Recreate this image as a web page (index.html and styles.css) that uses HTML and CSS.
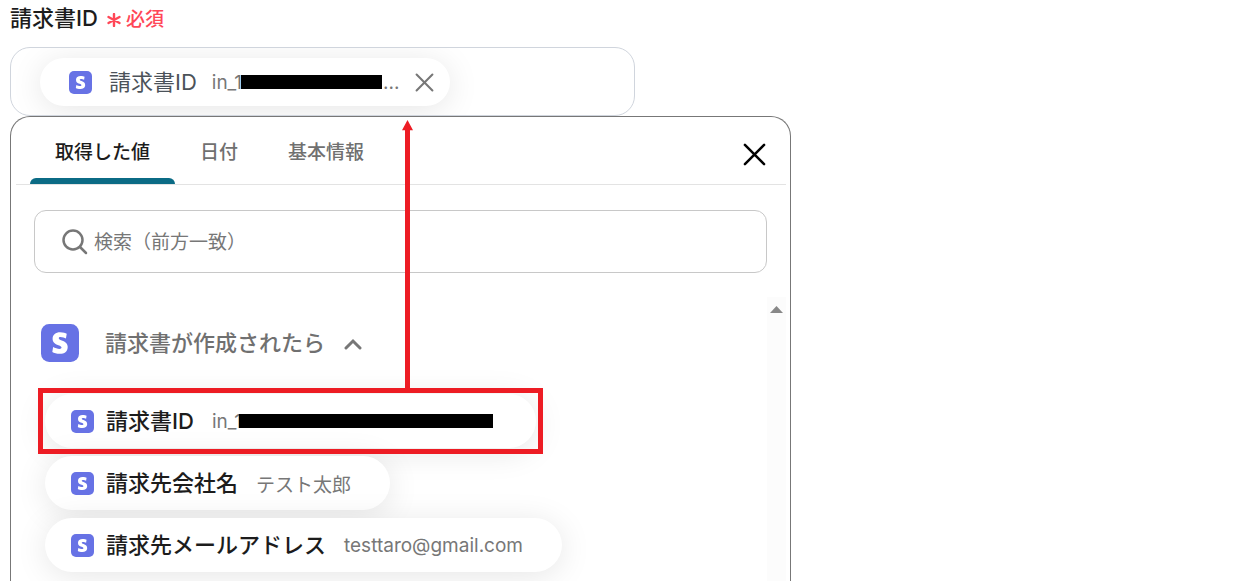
FILE: index.html
```html
<!DOCTYPE html>
<html lang="ja">

<head>
    <meta charset="UTF-8">
    <title>請求書ID</title>
    <link rel="stylesheet" href="styles.css">
</head>

<body>
    <svg class="defs" aria-hidden="true">
        <symbol id="logo" viewBox="0 0 37 37">
            <rect width="37" height="37" rx="8" fill="#6772e5" />
            <path transform="translate(8 8) scale(.875)" fill="#fff" d="M13.976 9.15c-2.172-.806-3.356-1.426-3.356-2.409 0-.831.683-1.305 1.901-1.305 2.227 0 4.515.858 6.09 1.631l.89-5.494C18.252.975 15.697 0 12.165 0 9.667 0 7.589.654 6.104 1.872 4.56 3.147 3.757 4.992 3.757 7.218c0 4.039 2.467 5.76 6.476 7.219 2.585.92 3.445 1.574 3.445 2.583 0 .98-.84 1.545-2.354 1.545-1.875 0-4.965-.921-6.99-2.109l-.9 5.555C5.175 22.99 8.385 24 11.714 24c2.641 0 4.843-.624 6.328-1.813 1.664-1.305 2.525-3.236 2.525-5.732 0-4.128-2.524-5.851-6.594-7.305z" />
        </symbol>
        <symbol id="cross" viewBox="0 0 24 24">
            <path d="M2 2L22 22M22 2L2 22" fill="none" stroke="currentColor" stroke-width="2.6" stroke-linecap="round" />
        </symbol>
    </svg>

    <div class="page">
        <div class="field-title">
            <span class="name">請求書ID</span>
            <svg class="star" viewBox="0 0 14 14"><path d="M7 1V13M1.500 4L12.500 10M12.500 4L1.500 10" stroke="currentColor" stroke-width="2.400" stroke-linecap="round" /></svg>
            <span class="required">必須</span>
        </div>

        <div class="field">
            <div class="chip selected">
                <svg class="logo"><use href="#logo" /></svg>
                <span class="label">請求書ID</span>
                <span class="value">in_1<i class="mask"></i>...</span>
                <button type="button" class="remove" aria-label="削除"><svg><use href="#cross" /></svg></button>
            </div>
        </div>

        <div class="panel">
            <div class="tabs">
                <button type="button" class="tab active">取得した値</button>
                <button type="button" class="tab">日付</button>
                <button type="button" class="tab">基本情報</button>
                <button type="button" class="close" aria-label="閉じる"><svg><use href="#cross" /></svg></button>
            </div>

            <label class="search">
                <svg viewBox="0 0 26 26"><circle cx="11" cy="11" r="9.500" /><path d="M18 18L24 24" /></svg>
                <input type="text" placeholder="検索（前方一致）" aria-label="検索（前方一致）">
            </label>

            <div class="scroll">
                <div class="list">
                    <button type="button" class="group">
                        <svg class="logo"><use href="#logo" /></svg>
                        <span>請求書が作成されたら</span>
                        <svg class="chevron" viewBox="0 0 18 12"><path d="M2 10L9 3L16 10" /></svg>
                    </button>
                    <ul>
                        <li>
                            <button type="button" class="chip">
                                <svg class="logo"><use href="#logo" /></svg>
                                <span class="label">請求書ID</span>
                                <span class="value">in_1<i class="mask"></i></span>
                            </button>
                            <div class="frame">
                                <svg class="arrow" viewBox="0 0 11 268" preserveAspectRatio="none"><path d="M5.500 0L11 10H8V268H3V10H0Z" /></svg>
                            </div>
                        </li>
                        <li>
                            <button type="button" class="chip">
                                <svg class="logo"><use href="#logo" /></svg>
                                <span class="label">請求先会社名</span>
                                <span class="value">テスト太郎</span>
                            </button>
                        </li>
                        <li>
                            <button type="button" class="chip">
                                <svg class="logo"><use href="#logo" /></svg>
                                <span class="label">請求先メールアドレス</span>
                                <span class="value">testtaro@gmail.com</span>
                            </button>
                        </li>
                    </ul>
                </div>
                <div class="bar"><svg viewBox="0 0 13 7"><path d="M6.500 0L13 7H0Z" /></svg></div>
            </div>
        </div>
    </div>
</body>

</html>
```
FILE: styles.css
```css
* {
    box-sizing: border-box;
    padding: 0;
    margin: 0;
}

body {
    background-color: #fff;
    color: #1c1c1c;
    font-family: Inter, "Noto Sans CJK JP", sans-serif;
    font-size: 19px;
}

button {
    border: none;
    background: none;
    color: inherit;
    font: inherit;
    cursor: pointer;
}

ul {
    list-style: none;
}

svg {
    display: block;
    flex: none;
}

.defs {
    position: absolute;
    width: 0;
    height: 0;
}

.page {
    display: flex;
    flex-direction: column;
    height: 100vh;
    padding: 4px 10px 0;
    overflow: hidden;
}

.field-title {
    display: flex;
    align-items: center;
    height: 28px;
    margin-bottom: 15px;
    font-weight: 500;
}

.name {
    padding-bottom: 4px;
    font-size: 22px;
}

.star {
    width: 14px;
    height: 14px;
    margin: 3px 5px 0 9px;
    color: #ff4757;
}

.required {
    padding-bottom: 2px;
    color: #ff4757;
}

.field {
    max-width: 625px;
    height: 69px;
    padding: 10px 29px;
    border: 1px solid #d0d5dd;
    border-radius: 20px;
    overflow: hidden;
    flex: none;
}

.chip {
    display: inline-flex;
    align-items: center;
    height: 54px;
    padding: 0 39px 0 26px;
    border-radius: 27px;
    background-color: #fff;
    box-shadow: 0 4px 32px rgba(0, 0, 0, .1);
    white-space: nowrap;
}

.chip .logo {
    width: 23px;
    height: 23px;
    margin-right: 12px;
}

.chip .label {
    margin-right: 18px;
    padding-bottom: 4px;
    font-size: 22px;
    font-weight: 500;
}

.chip .value {
    color: #777;
}

/* covers the rest of the id */
.mask {
    display: inline-block;
    width: 254px;
    height: 14px;
    margin: 0 4px 0 -3px;
    background-color: #000;
}

.selected {
    height: 48px;
    padding: 0 16px 0 29px;
}

.selected .logo {
    margin-right: 17px;
}

.selected .label {
    margin-right: 15px;
    color: #4b5259;
    font-weight: 400;
}

.selected .mask {
    width: 141px;
    margin: 0 1px 0 -1px;
}

.remove {
    margin-left: 16px;
    color: #777;
}

.remove svg {
    width: 19px;
    height: 19px;
}

.panel {
    display: flex;
    flex-direction: column;
    flex: 1;
    min-height: 0;
    max-width: 781px;
    padding: 0 4px 0 5px;
    border: 1px solid #777;
    border-bottom: none;
    border-radius: 20px 20px 0 0;
    background-color: #fff;
}

.tabs {
    display: flex;
    height: 68px;
    padding: 0 20px 0 14px;
    border-bottom: 1px solid #e3e3e3;
    flex: none;
}

.tab {
    position: relative;
    padding: 0 25px;
    color: #707070;
    font-weight: 500;
}

.active {
    color: #1c1c1c;
}

.active::after {
    content: "";
    position: absolute;
    left: 0;
    right: 0;
    bottom: 0;
    height: 6px;
    border-radius: 6px 6px 0 0;
    background-color: #0b6b85;
}

.close {
    margin: 8px 0 0 auto;
    color: #000;
}

.close svg {
    width: 23px;
    height: 23px;
}

.search {
    display: flex;
    align-items: center;
    height: 63px;
    margin: 25px 19px 24px 18px;
    padding: 0 27px;
    border: 1px solid #c8c8c8;
    border-radius: 12px;
    flex: none;
}

.search svg {
    width: 26px;
    height: 26px;
    fill: none;
    stroke: #777;
    stroke-width: 2.5;
    stroke-linecap: round;
}

.search input {
    flex: 1;
    min-width: 0;
    margin-left: 6px;
    padding-top: 2px;
    border: none;
    outline: none;
    font: inherit;
}

.search input::placeholder {
    color: #777;
}

.scroll {
    display: flex;
    flex: 1;
    min-height: 0;
}

.list {
    flex: 1;
    padding: 27px 0 0 25px;
}

.group {
    display: flex;
    align-items: center;
    height: 38px;
    color: #707070;
    font-size: 22px;
    font-weight: 500;
}

.group span {
    padding-bottom: 4px;
}

.group .logo {
    width: 38px;
    height: 38px;
    margin-right: 26px;
}

.chevron {
    width: 18px;
    height: 12px;
    margin: 2px 0 0 19px;
    fill: none;
    stroke: #777;
    stroke-width: 3;
    stroke-linecap: round;
}

.list ul {
    display: flex;
    flex-direction: column;
    align-items: flex-start;
    gap: 8px;
    margin: 32px 0 0 4px;
}

.list li {
    position: relative;
    display: flex;
}

/* highlight around the picked item, with the arrow up to the field */
.frame {
    position: absolute;
    inset: -6px -7px;
    border: 5px solid #ed1c24;
    z-index: 1;
    pointer-events: none;
}

.arrow {
    position: absolute;
    left: 359px;
    bottom: 100%;
    width: 11px;
    height: 273px;
    fill: #ed1c24;
}

.bar {
    width: 19px;
    padding: 9px 3px;
    background-color: #fcfcfc;
}

.bar svg {
    width: 13px;
    height: 7px;
    fill: #888;
}
```
